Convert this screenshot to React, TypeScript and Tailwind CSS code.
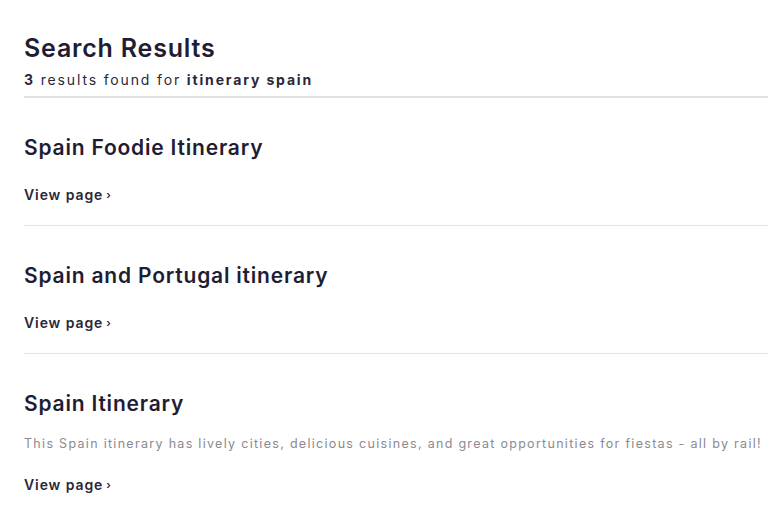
import React from "react";

const font = { fontFamily: "Inter, 'Noto Sans', sans-serif" };

function ViewPage() {
  return (
    <div className="text-[14px] font-semibold text-[#2a2838] leading-[18px] tracking-[0.9px] flex items-center gap-[3px]">
      View page<span className="text-[11px]">›</span>
    </div>
  );
}

function Title({ children }: { children: React.ReactNode }) {
  return (
    <div className="text-[21px] font-semibold text-[#1f1d33] leading-[26px] tracking-[0.8px]">{children}</div>
  );
}

export default function App() {
  return (
    <div className="w-[768px] h-[512px] bg-white overflow-hidden" style={font}>
      <div className="pl-6">
        <div className="pt-[33px] text-[25px] font-semibold text-[#1f1d33] leading-[30px] tracking-[0.8px]">Search Results</div>
        <div className="mt-[8px] text-[14px] text-[#2a2838] leading-[18px] tracking-[1.85px]">
          <span className="font-bold">3</span> results found for <span className="font-bold">itinerary spain</span>
        </div>
        <div className="mt-[7px] h-[2px] bg-[#e2e2e2]" />

        <div className="pt-[37px] pb-[21px] border-b border-[#e4e4e4]">
          <Title>Spain Foodie Itinerary</Title>
          <div className="mt-[25px]"><ViewPage /></div>
        </div>
        <div className="pt-[37px] pb-[21px] border-b border-[#e4e4e4]">
          <Title>Spain and Portugal itinerary</Title>
          <div className="mt-[25px]"><ViewPage /></div>
        </div>
        <div className="pt-[37px]">
          <Title>Spain Itinerary</Title>
          <div className="mt-[18px] text-[12.5px] text-[#8a8a90] leading-[18px] tracking-[1.3px] whitespace-nowrap">
            This Spain itinerary has lively cities, delicious cuisines, and great opportunities for fiestas - all by rail!
          </div>
          <div className="mt-[23px]"><ViewPage /></div>
        </div>
      </div>
    </div>
  );
}
